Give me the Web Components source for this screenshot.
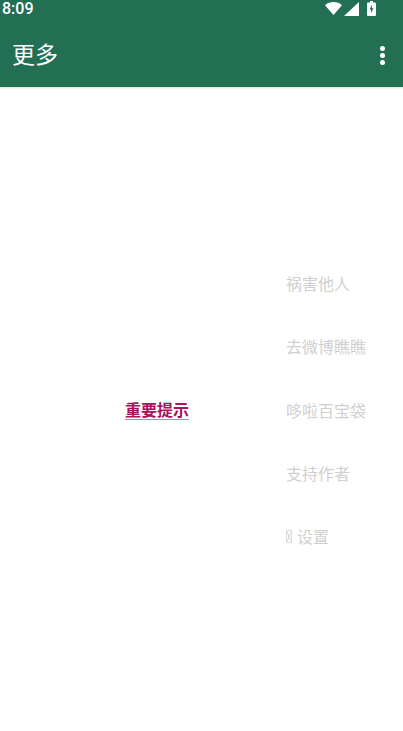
<!DOCTYPE html>
<html lang="zh">
<head>
<meta charset="utf-8">
<title>更多</title>
<style>
  html, body { margin: 0; padding: 0; height: 100%; background: #fff; }
  body { font-family: Roboto, "Noto Sans CJK SC", sans-serif; overflow: hidden; }
  more-page { height: 731px; }
</style>
</head>
<body>
<more-page>
  <status-bar slot="top" time="8:09"></status-bar>
  <app-bar slot="top" title="更多"></app-bar>
  <notice-link>重要提示</notice-link>
  <menu-item slot="menu">祸害他人</menu-item>
  <menu-item slot="menu">去微博瞧瞧</menu-item>
  <menu-item slot="menu">哆啦百宝袋</menu-item>
  <menu-item slot="menu">支持作者</menu-item>
  <menu-item slot="menu" tofu>设置</menu-item>
</more-page>

<script>
class MorePage extends HTMLElement {
  constructor() {
    super();
    this.attachShadow({ mode: 'open' });
    this.shadowRoot.innerHTML = `
      <style>
        :host { display: flex; flex-direction: column; background: #fff; }
        .top { display: block; background: #226f54; box-shadow: 0 1px 2px rgba(0,0,0,.15); }
        .body { flex: 1; display: flex; align-items: center; padding-top: 2px; }
        .main { width: 286px; display: flex; justify-content: center; }
        .menu { display: flex; flex-direction: column; gap: 40.4px; }
      </style>
      <div class="top"><slot name="top"></slot></div>
      <div class="body">
        <div class="main"><slot></slot></div>
        <div class="menu"><slot name="menu"></slot></div>
      </div>
    `;
  }
}

class StatusBar extends HTMLElement {
  constructor() {
    super();
    this.attachShadow({ mode: 'open' });
    this.shadowRoot.innerHTML = `
      <style>
        :host { display: flex; height: 24px; align-items: center; justify-content: space-between; padding: 0 27px 7px 2px; box-sizing: border-box; color: #fff; font: 500 16px/17px Roboto, sans-serif; }
        .icons { display: flex; align-items: center; }
        svg { display: block; }
      </style>
      <span>${this.getAttribute('time')}</span>
      <div class="icons">
        <svg width="17" height="13" viewBox="0 0 17 13" style="margin-right:2px"><path fill="#fff" d="M8.500 13 0 3.200C2.300 1.200 5.200 0 8.500 0S14.700 1.200 17 3.200z"/></svg>
        <svg width="15" height="14" viewBox="0 0 15 14" style="margin-right:8px"><path fill="#fff" d="M15 0v14H0z"/></svg>
        <svg width="9" height="15" viewBox="0 0 9 15"><path fill="#fff" fill-rule="evenodd" d="M3 0h3v1.500h2a1 1 0 0 1 1 1V14a1 1 0 0 1-1 1H1a1 1 0 0 1-1-1V2.500a1 1 0 0 1 1-1h2zM5 4 2.500 8.500H4V12l2.500-4.700H5z"/></svg>
      </div>
    `;
  }
}

class AppBar extends HTMLElement {
  constructor() {
    super();
    this.attachShadow({ mode: 'open' });
    this.shadowRoot.innerHTML = `
      <style>
        :host { display: flex; height: 63px; align-items: center; justify-content: space-between; padding: 0 18px 0 12px; color: #fff; font: 23px/30px "Noto Sans CJK SC", sans-serif; }
        span { margin-bottom: 5px; }
        .dots { display: flex; flex-direction: column; gap: 2px; margin-bottom: 1px; }
        .dots i { display: block; width: 5px; height: 5px; border-radius: 50%; background: #fff; }
      </style>
      <span>${this.getAttribute('title')}</span>
      <div class="dots"><i></i><i></i><i></i></div>
    `;
  }
}

class NoticeLink extends HTMLElement {
  constructor() {
    super();
    this.attachShadow({ mode: 'open' });
    this.shadowRoot.innerHTML = `
      <style>
        :host { display: block; color: #a8145e; font: 700 16px/23px "Noto Sans CJK SC", sans-serif; margin: 0 0 1px 28px; }
        span { text-decoration: underline; text-decoration-thickness: 1px; text-underline-offset: 3px; text-decoration-color: #d678a8; }
      </style>
      <span><slot></slot></span>
    `;
  }
}

class MenuItem extends HTMLElement {
  constructor() {
    super();
    this.attachShadow({ mode: 'open' });
    const tofu = this.hasAttribute('tofu')
      ? `<svg width="6" height="13" viewBox="0 0 6 13"><path fill="none" stroke="#dcdcdc" d="M.5.500h5v12h-5zM.5.500l5 12M5.500.500l-5 12"/></svg>`
      : '';
    this.shadowRoot.innerHTML = `
      <style>
        :host { display: flex; align-items: center; gap: 5px; height: 23px; color: #d0d0d0; font: 16px/23px "Noto Sans CJK SC", sans-serif; white-space: nowrap; }
      </style>
      ${tofu}<span><slot></slot></span>
    `;
  }
}

customElements.define('more-page', MorePage);
customElements.define('status-bar', StatusBar);
customElements.define('app-bar', AppBar);
customElements.define('notice-link', NoticeLink);
customElements.define('menu-item', MenuItem);
</script>
</body>
</html>
